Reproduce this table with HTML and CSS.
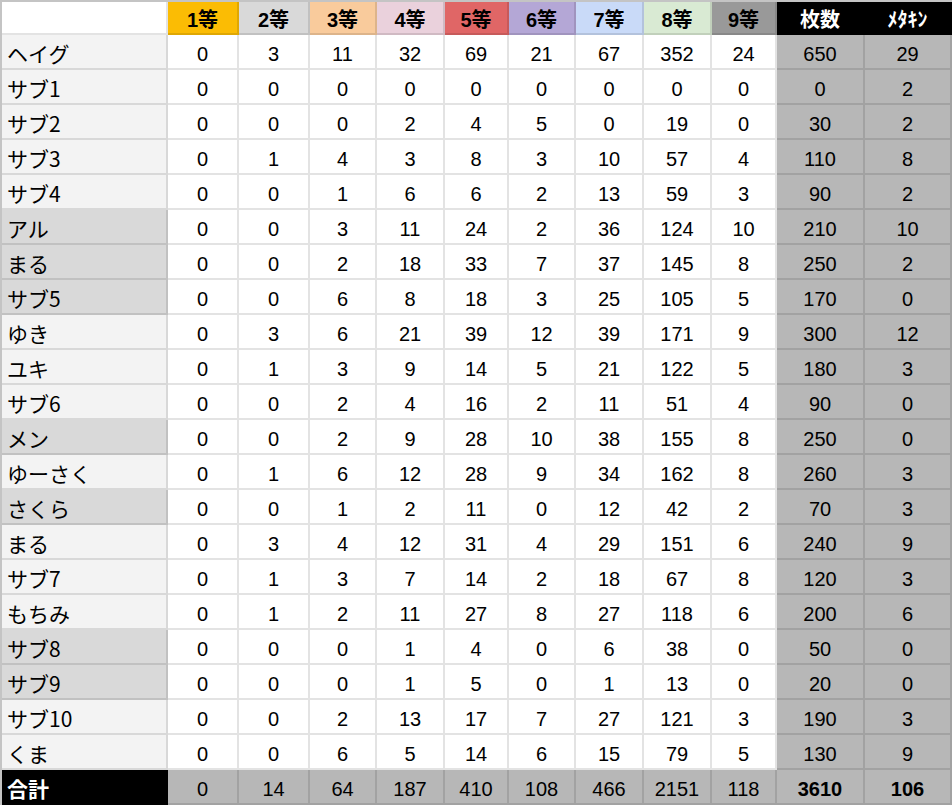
FILE: index.html
```html
<!DOCTYPE html>
<html lang="ja">
<head>
<meta charset="utf-8">
<link rel="stylesheet" href="styles.css">
</head>
<body>
<div class="sheet">
  <div class="row head">
    <div class="c name blank"></div>
    <div class="c h1">1等</div>
    <div class="c h2">2等</div>
    <div class="c h3">3等</div>
    <div class="c h4">4等</div>
    <div class="c h5">5等</div>
    <div class="c h6">6等</div>
    <div class="c h7">7等</div>
    <div class="c h8">8等</div>
    <div class="c h9">9等</div>
    <div class="c hk">枚数</div>
    <div class="c hk">ﾒﾀｷﾝ</div>
  </div>
  <div class="row"><div class="c name">ヘイグ</div><div class="c">0</div><div class="c">3</div><div class="c">11</div><div class="c">32</div><div class="c">69</div><div class="c">21</div><div class="c">67</div><div class="c">352</div><div class="c">24</div><div class="c g">650</div><div class="c g">29</div></div>
  <div class="row"><div class="c name">サブ1</div><div class="c">0</div><div class="c">0</div><div class="c">0</div><div class="c">0</div><div class="c">0</div><div class="c">0</div><div class="c">0</div><div class="c">0</div><div class="c">0</div><div class="c g">0</div><div class="c g">2</div></div>
  <div class="row"><div class="c name">サブ2</div><div class="c">0</div><div class="c">0</div><div class="c">0</div><div class="c">2</div><div class="c">4</div><div class="c">5</div><div class="c">0</div><div class="c">19</div><div class="c">0</div><div class="c g">30</div><div class="c g">2</div></div>
  <div class="row"><div class="c name">サブ3</div><div class="c">0</div><div class="c">1</div><div class="c">4</div><div class="c">3</div><div class="c">8</div><div class="c">3</div><div class="c">10</div><div class="c">57</div><div class="c">4</div><div class="c g">110</div><div class="c g">8</div></div>
  <div class="row"><div class="c name">サブ4</div><div class="c">0</div><div class="c">0</div><div class="c">1</div><div class="c">6</div><div class="c">6</div><div class="c">2</div><div class="c">13</div><div class="c">59</div><div class="c">3</div><div class="c g">90</div><div class="c g">2</div></div>
  <div class="row"><div class="c name dk">アル</div><div class="c">0</div><div class="c">0</div><div class="c">3</div><div class="c">11</div><div class="c">24</div><div class="c">2</div><div class="c">36</div><div class="c">124</div><div class="c">10</div><div class="c g">210</div><div class="c g">10</div></div>
  <div class="row"><div class="c name dk">まる</div><div class="c">0</div><div class="c">0</div><div class="c">2</div><div class="c">18</div><div class="c">33</div><div class="c">7</div><div class="c">37</div><div class="c">145</div><div class="c">8</div><div class="c g">250</div><div class="c g">2</div></div>
  <div class="row"><div class="c name dk">サブ5</div><div class="c">0</div><div class="c">0</div><div class="c">6</div><div class="c">8</div><div class="c">18</div><div class="c">3</div><div class="c">25</div><div class="c">105</div><div class="c">5</div><div class="c g">170</div><div class="c g">0</div></div>
  <div class="row"><div class="c name">ゆき</div><div class="c">0</div><div class="c">3</div><div class="c">6</div><div class="c">21</div><div class="c">39</div><div class="c">12</div><div class="c">39</div><div class="c">171</div><div class="c">9</div><div class="c g">300</div><div class="c g">12</div></div>
  <div class="row"><div class="c name">ユキ</div><div class="c">0</div><div class="c">1</div><div class="c">3</div><div class="c">9</div><div class="c">14</div><div class="c">5</div><div class="c">21</div><div class="c">122</div><div class="c">5</div><div class="c g">180</div><div class="c g">3</div></div>
  <div class="row"><div class="c name">サブ6</div><div class="c">0</div><div class="c">0</div><div class="c">2</div><div class="c">4</div><div class="c">16</div><div class="c">2</div><div class="c">11</div><div class="c">51</div><div class="c">4</div><div class="c g">90</div><div class="c g">0</div></div>
  <div class="row"><div class="c name dk">メン</div><div class="c">0</div><div class="c">0</div><div class="c">2</div><div class="c">9</div><div class="c">28</div><div class="c">10</div><div class="c">38</div><div class="c">155</div><div class="c">8</div><div class="c g">250</div><div class="c g">0</div></div>
  <div class="row"><div class="c name">ゆーさく</div><div class="c">0</div><div class="c">1</div><div class="c">6</div><div class="c">12</div><div class="c">28</div><div class="c">9</div><div class="c">34</div><div class="c">162</div><div class="c">8</div><div class="c g">260</div><div class="c g">3</div></div>
  <div class="row"><div class="c name dk">さくら</div><div class="c">0</div><div class="c">0</div><div class="c">1</div><div class="c">2</div><div class="c">11</div><div class="c">0</div><div class="c">12</div><div class="c">42</div><div class="c">2</div><div class="c g">70</div><div class="c g">3</div></div>
  <div class="row"><div class="c name">まる</div><div class="c">0</div><div class="c">3</div><div class="c">4</div><div class="c">12</div><div class="c">31</div><div class="c">4</div><div class="c">29</div><div class="c">151</div><div class="c">6</div><div class="c g">240</div><div class="c g">9</div></div>
  <div class="row"><div class="c name">サブ7</div><div class="c">0</div><div class="c">1</div><div class="c">3</div><div class="c">7</div><div class="c">14</div><div class="c">2</div><div class="c">18</div><div class="c">67</div><div class="c">8</div><div class="c g">120</div><div class="c g">3</div></div>
  <div class="row"><div class="c name">もちみ</div><div class="c">0</div><div class="c">1</div><div class="c">2</div><div class="c">11</div><div class="c">27</div><div class="c">8</div><div class="c">27</div><div class="c">118</div><div class="c">6</div><div class="c g">200</div><div class="c g">6</div></div>
  <div class="row"><div class="c name dk">サブ8</div><div class="c">0</div><div class="c">0</div><div class="c">0</div><div class="c">1</div><div class="c">4</div><div class="c">0</div><div class="c">6</div><div class="c">38</div><div class="c">0</div><div class="c g">50</div><div class="c g">0</div></div>
  <div class="row"><div class="c name dk">サブ9</div><div class="c">0</div><div class="c">0</div><div class="c">0</div><div class="c">1</div><div class="c">5</div><div class="c">0</div><div class="c">1</div><div class="c">13</div><div class="c">0</div><div class="c g">20</div><div class="c g">0</div></div>
  <div class="row"><div class="c name">サブ10</div><div class="c">0</div><div class="c">0</div><div class="c">2</div><div class="c">13</div><div class="c">17</div><div class="c">7</div><div class="c">27</div><div class="c">121</div><div class="c">3</div><div class="c g">190</div><div class="c g">3</div></div>
  <div class="row"><div class="c name">くま</div><div class="c">0</div><div class="c">0</div><div class="c">6</div><div class="c">5</div><div class="c">14</div><div class="c">6</div><div class="c">15</div><div class="c">79</div><div class="c">5</div><div class="c g">130</div><div class="c g">9</div></div>
  <div class="row total"><div class="c name tot">合計</div><div class="c g">0</div><div class="c g">14</div><div class="c g">64</div><div class="c g">187</div><div class="c g">410</div><div class="c g">108</div><div class="c g">466</div><div class="c g">2151</div><div class="c g">118</div><div class="c g b">3610</div><div class="c g b">106</div></div>
</div>
</body>
</html>
```
FILE: styles.css
```css
html, body {
  margin: 0;
  padding: 0;
  background: #ffffff;
}

.sheet {
  width: 952px;
  box-sizing: border-box;
  border-top: 2px solid #c4c4c4;
  border-left: 2px solid #c4c4c4;
  font-family: "Liberation Sans", "Noto Sans CJK JP", sans-serif;
  font-size: 20px;
  color: #000;
}

.row {
  display: grid;
  grid-template-columns: 166px 71px 71px 67px 68px 64px 67px 68px 68px 65px 88px 87px;
  height: 35px;
}

.row.head {
  height: 33px;
}

.c {
  box-sizing: border-box;
  border-right: 2px solid rgba(0, 0, 0, 0.11);
  border-bottom: 2px solid rgba(0, 0, 0, 0.11);
  display: flex;
  align-items: center;
  justify-content: center;
  padding-top: 6px;
  background: #ffffff;
  white-space: nowrap;
  overflow: hidden;
}

.head .c {
  font-weight: bold;
  padding-top: 1px;
}

.name {
  justify-content: flex-start;
  padding-left: 5px;
  background: #f3f3f3;
  font-family: "Noto Sans CJK JP", "Liberation Sans", sans-serif;
  font-size: 21px;
  padding-top: 2px;
}

.name.dk {
  background: #d9d9d9;
}

.name.blank {
  background: #ffffff;
}

.h1 { background: #fbbc04; }
.h2 { background: #d9d9d9; }
.h3 { background: #f9cb9c; }
.h4 { background: #ead1dc; }
.h5 { background: #e06666; }
.h6 { background: #b4a7d6; }
.h7 { background: #c9daf8; }
.h8 { background: #d9ead3; }
.h9 { background: #999999; }
.hk {
  background: #000000;
  color: #ffffff;
}

.g {
  background: #b7b7b7;
}

.b {
  font-weight: bold;
}

.name.tot {
  background: #000000;
  color: #ffffff;
  font-weight: bold;
}
```
